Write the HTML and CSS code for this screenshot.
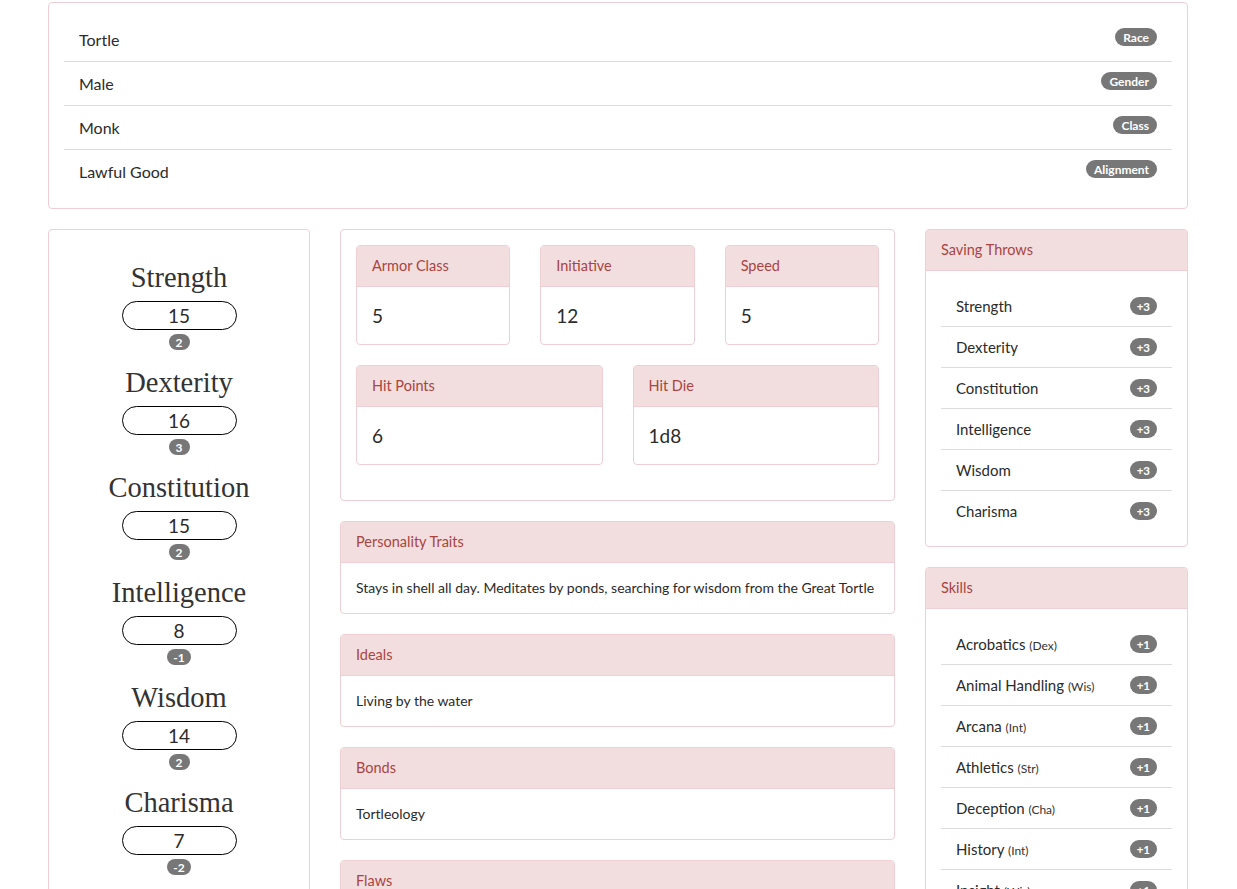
FILE: index.html
```html
<!DOCTYPE html>
<html>
<head>
<meta charset="utf-8">
<link rel="stylesheet" href="styles.css">
</head>
<body>
<div class="page">
  <div class="card top-card">
    <div class="card-body">
      <ul class="list">
        <li class="item"><span>Tortle</span><span class="badge">Race</span></li>
        <li class="item"><span>Male</span><span class="badge">Gender</span></li>
        <li class="item"><span>Monk</span><span class="badge">Class</span></li>
        <li class="item"><span>Lawful Good</span><span class="badge">Alignment</span></li>
      </ul>
    </div>
  </div>

  <div class="row">
    <div class="col">
      <div class="card abilities">
        <div class="ability">
          <div class="ability-name">Strength</div>
          <div class="ability-box">15</div>
          <span class="badge mod">2</span>
        </div>
        <div class="ability">
          <div class="ability-name">Dexterity</div>
          <div class="ability-box">16</div>
          <span class="badge mod">3</span>
        </div>
        <div class="ability">
          <div class="ability-name">Constitution</div>
          <div class="ability-box">15</div>
          <span class="badge mod">2</span>
        </div>
        <div class="ability">
          <div class="ability-name">Intelligence</div>
          <div class="ability-box">8</div>
          <span class="badge mod">-1</span>
        </div>
        <div class="ability">
          <div class="ability-name">Wisdom</div>
          <div class="ability-box">14</div>
          <span class="badge mod">2</span>
        </div>
        <div class="ability">
          <div class="ability-name">Charisma</div>
          <div class="ability-box">7</div>
          <span class="badge mod">-2</span>
        </div>
      </div>
    </div>

    <div class="col">
      <div class="card stats">
        <div class="stat-row three">
          <div class="card sub"><div class="card-header">Armor Class</div><div class="sub-body">5</div></div>
          <div class="card sub"><div class="card-header">Initiative</div><div class="sub-body">12</div></div>
          <div class="card sub"><div class="card-header">Speed</div><div class="sub-body">5</div></div>
        </div>
        <div class="stat-row two">
          <div class="card sub"><div class="card-header">Hit Points</div><div class="sub-body">6</div></div>
          <div class="card sub"><div class="card-header">Hit Die</div><div class="sub-body">1d8</div></div>
        </div>
      </div>

      <div class="card text-card">
        <div class="card-header">Personality Traits</div>
        <div class="text-body">Stays in shell all day. Meditates by ponds, searching for wisdom from the Great Tortle</div>
      </div>
      <div class="card text-card">
        <div class="card-header">Ideals</div>
        <div class="text-body">Living by the water</div>
      </div>
      <div class="card text-card">
        <div class="card-header">Bonds</div>
        <div class="text-body">Tortleology</div>
      </div>
      <div class="card text-card">
        <div class="card-header">Flaws</div>
        <div class="text-body">Slow to act</div>
      </div>
    </div>

    <div class="col">
      <div class="card side-card">
        <div class="card-header">Saving Throws</div>
        <div class="card-body">
          <ul class="list small">
            <li class="item"><span>Strength</span><span class="badge">+3</span></li>
            <li class="item"><span>Dexterity</span><span class="badge">+3</span></li>
            <li class="item"><span>Constitution</span><span class="badge">+3</span></li>
            <li class="item"><span>Intelligence</span><span class="badge">+3</span></li>
            <li class="item"><span>Wisdom</span><span class="badge">+3</span></li>
            <li class="item"><span>Charisma</span><span class="badge">+3</span></li>
          </ul>
        </div>
      </div>
      <div class="card side-card">
        <div class="card-header">Skills</div>
        <div class="card-body">
          <ul class="list small">
            <li class="item"><span>Acrobatics <small>(Dex)</small></span><span class="badge">+1</span></li>
            <li class="item"><span>Animal Handling <small>(Wis)</small></span><span class="badge">+1</span></li>
            <li class="item"><span>Arcana <small>(Int)</small></span><span class="badge">+1</span></li>
            <li class="item"><span>Athletics <small>(Str)</small></span><span class="badge">+1</span></li>
            <li class="item"><span>Deception <small>(Cha)</small></span><span class="badge">+1</span></li>
            <li class="item"><span>History <small>(Int)</small></span><span class="badge">+1</span></li>
            <li class="item"><span>Insight <small>(Wis)</small></span><span class="badge">+1</span></li>
            <li class="item"><span>Intimidation <small>(Cha)</small></span><span class="badge">+1</span></li>
          </ul>
        </div>
      </div>
    </div>
  </div>
</div>
</body>
</html>
```

FILE: styles.css
```css
* { box-sizing: border-box; }
html, body { margin: 0; padding: 0; background: #fff; }
body {
  font-family: Lato, "Open Sans", sans-serif;
  color: #2b2b2b;
  font-size: 15px;
}
.page {
  width: 1140px;
  margin: 0 0 0 48px;
  padding-top: 2px;
}
.card {
  border: 1px solid #efcfd4;
  border-radius: 4px;
  background: #fff;
  overflow: hidden;
}
.card-body { padding: 15px; }
.list { list-style: none; margin: 0; padding: 0; }
.item {
  display: flex;
  justify-content: space-between;
  align-items: center;
  padding: 12px 15px 11px;
  line-height: 20px;
  font-size: 16px;
  border-top: 1px solid #dcdcdc;
}
.item:first-child { border-top: 0; }
.top-card .item .badge { margin-top: -6px; padding: 3px 8px 2px; }
.badge {
  display: inline-block;
  background: #777;
  color: #fff;
  font-weight: 700;
  font-size: 12px;
  line-height: 13px;
  padding: 3px 7px 2px;
  border-radius: 10px;
}
.row {
  display: grid;
  grid-template-columns: 262px 555px 263px;
  column-gap: 30px;
  margin-top: 20px;
  align-items: start;
}
.abilities {
  padding: 31px 0 10px;
  text-align: center;
}
.ability { margin-bottom: 16px; display: flex; flex-direction: column; align-items: center; }
.ability-name {
  font-family: "Liberation Serif", "Times New Roman", serif;
  font-size: 28.5px;
  line-height: 34px;
  color: #333;
  margin-bottom: 6px;
}
.ability-box {
  width: 115px;
  height: 29px;
  border: 1px solid #000;
  border-radius: 15px;
  font-size: 19px;
  line-height: 27px;
  color: #2b2b2b;
  margin-bottom: 4px;
}
.badge.mod { padding: 2px 6px 1px; min-width: 21px; line-height: 13px; }
.card-header {
  background: #f2dede;
  color: #a94442;
  border-bottom: 1px solid #efcfd4;
  padding: 10px 15px;
  font-size: 14.5px;
  line-height: 20px;
}
.stats { padding: 15px; margin-bottom: 20px; }
.stat-row { display: grid; column-gap: 30px; margin-bottom: 20px; }
.stat-row.three { grid-template-columns: 1fr 1fr 1fr; }
.stat-row.two { grid-template-columns: 1fr 1fr; }
.sub-body {
  padding: 15px;
  font-size: 19px;
  line-height: 27px;
}
.text-card { margin-bottom: 20px; }
.text-body {
  padding: 15px;
  font-size: 14px;
  line-height: 20px;
}
.side-card { margin-bottom: 20px; }
.list.small .item {
  padding: 10px 15px 10px;
  font-size: 15px;
  line-height: 20px;
}
.list.small .badge { padding: 3px 7px 2px; font-size: 11.5px; margin-top: -1px; }
small { font-size: 12px; line-height: 1; color: #333; }
```
